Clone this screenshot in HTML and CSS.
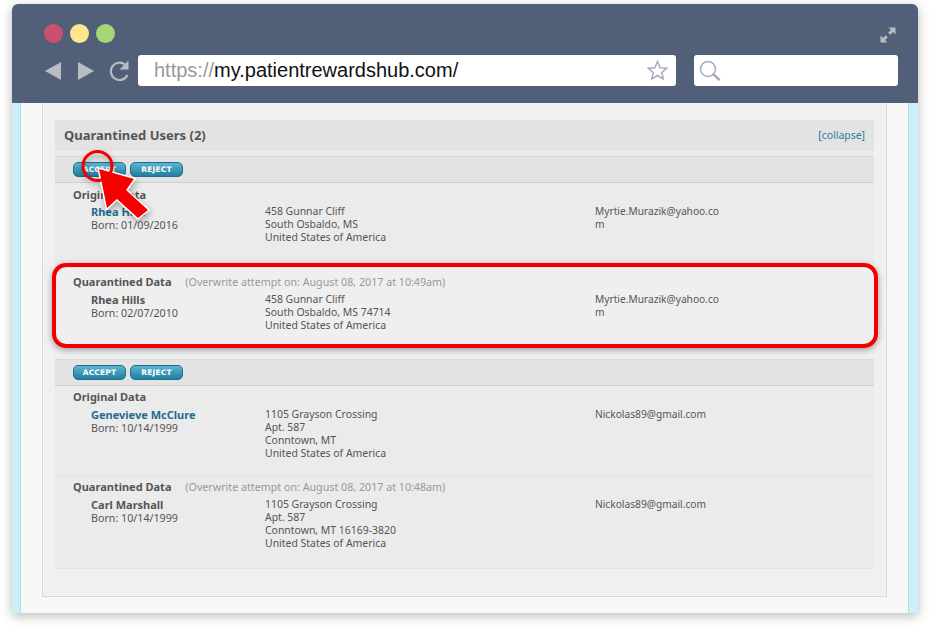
FILE: index.html
```html
<!DOCTYPE html>
<html lang="en">
<head>
<meta charset="utf-8">
<title>Quarantined Users</title>
<link rel="stylesheet" href="styles.css">
</head>
<body>
<div class="window">
  <header class="toolbar">
    <div class="top-row">
      <div class="lights">
        <span class="light red"></span><span class="light yellow"></span><span class="light green"></span>
      </div>
      <svg class="expand" width="16" height="16" viewBox="0 0 16 16"><path fill="#b9bcc2" d="M15.500 .5v7l-2.500-2.500-2.800 2.800-2-2 2.800-2.800-2.500-2.500zM.5 15.500v-7l2.500 2.500 2.800-2.800 2 2-2.800 2.800 2.500 2.500z"/></svg>
    </div>
    <div class="nav-row">
      <svg class="nav-icon back" width="16" height="18" viewBox="0 0 16 18"><path fill="#b9bcc2" d="M16 0v18L0 9z"/></svg>
      <svg class="nav-icon fwd" width="16" height="18" viewBox="0 0 16 18"><path fill="#b9bcc2" d="M0 0v18l16-9z"/></svg>
      <svg class="nav-icon reload" width="20" height="21" viewBox="0 0 20 21"><path fill="none" stroke="#b9bcc2" stroke-width="2.200" d="M16 4.500A8.700 8.700 0 1 0 18.500 15"/><path fill="#b9bcc2" d="M19.500 .5v9h-9z"/></svg>
      <div class="url-bar">
        <span class="url"><span class="scheme">https://</span>my.patientrewardshub.com/</span>
        <svg width="21" height="21" viewBox="0 0 21 21"><path fill="none" stroke="#a5adbb" stroke-width="1.500" d="M10.500 1.500l2.600 6.200 6.700.5-5.100 4.300 1.600 6.500-5.800-3.500-5.800 3.500 1.600-6.500-5.100-4.300 6.700-.5z"/></svg>
      </div>
      <div class="search-bar">
        <svg width="22" height="22" viewBox="0 0 22 22"><circle cx="9" cy="9" r="7.500" fill="none" stroke="#a5adbb" stroke-width="1.500"/><path stroke="#a5adbb" stroke-width="2.400" stroke-linecap="round" d="M14.500 14.500l5.500 5"/></svg>
      </div>
    </div>
  </header>
  <div class="page">
    <div class="strip"></div>
    <main class="margin">
      <div class="panel">
        <section class="section">
          <div class="section-head">
            <h2>Quarantined Users (2)</h2>
            <a class="collapse" href="#">[collapse]</a>
          </div>
          <div class="actions">
            <button class="btn">ACCEPT</button><button class="btn">REJECT</button>
          </div>
          <div class="block first">
            <h3>Original Data</h3>
            <div class="row">
              <div class="who"><a class="name" href="#">Rhea Hills</a><br>Born: 01/09/2016</div>
              <div class="addr">458 Gunnar Cliff<br>South Osbaldo, MS<br>United States of America</div>
              <div class="mail">Myrtie.Murazik@yahoo.co<br>m</div>
            </div>
          </div>
          <div class="block second">
            <h3>Quarantined Data <span class="note">(Overwrite attempt on: August 08, 2017 at 10:49am)</span></h3>
            <div class="row">
              <div class="who"><b class="name plain">Rhea Hills</b><br>Born: 02/07/2010</div>
              <div class="addr">458 Gunnar Cliff<br>South Osbaldo, MS 74714<br>United States of America</div>
              <div class="mail">Myrtie.Murazik@yahoo.co<br>m</div>
            </div>
          </div>
          <div class="actions spaced">
            <button class="btn">ACCEPT</button><button class="btn">REJECT</button>
          </div>
          <div class="block third">
            <h3>Original Data</h3>
            <div class="row">
              <div class="who"><a class="name" href="#">Genevieve McClure</a><br>Born: 10/14/1999</div>
              <div class="addr">1105 Grayson Crossing<br>Apt. 587<br>Conntown, MT<br>United States of America</div>
              <div class="mail">Nickolas89@gmail.com</div>
            </div>
          </div>
          <div class="block fourth">
            <h3>Quarantined Data <span class="note">(Overwrite attempt on: August 08, 2017 at 10:48am)</span></h3>
            <div class="row">
              <div class="who"><b class="name plain">Carl Marshall</b><br>Born: 10/14/1999</div>
              <div class="addr">1105 Grayson Crossing<br>Apt. 587<br>Conntown, MT 16169-3820<br>United States of America</div>
              <div class="mail">Nickolas89@gmail.com</div>
            </div>
          </div>
        </section>
      </div>
    </main>
    <div class="strip right"></div>
    <div class="highlight"></div>
    <svg class="pointer" width="74" height="74" viewBox="0 0 74 74">
      <path fill="#f40000" stroke="#fff" stroke-width="3" d="M20 21l35 10-8 11 22 20-10 8-21-19-10 9z"/>
      <circle cx="18.500" cy="18" r="14.500" fill="none" stroke="#f00000" stroke-width="3"/>
      <path fill="#f40000" d="M20 21l35 10-8 11 22 20-10 8-21-19-10 9z"/>
    </svg>
  </div>
</div>
</body>
</html>
```

FILE: styles.css
```css
* { box-sizing: border-box; }
html, body { margin: 0; height: 100%; background: #fff; }
body { padding: 4px 12px 20px; font-family: "Noto Sans", sans-serif; font-size: 10.450px; line-height: 13px; color: #555; overflow: hidden; }
.window { width: 906px; height: 609px; display: flex; flex-direction: column; border-radius: 6px 6px 0 0; box-shadow: 0 3px 12px rgba(0,0,0,.28); }
.toolbar { height: 99px; background: #516078; border-radius: 6px 6px 0 0; padding: 19px 22px 0 32px; flex: none; }
.top-row { height: 20px; display: flex; justify-content: space-between; align-items: center; }
.lights { display: flex; gap: 7px; }
.light { width: 19px; height: 19px; border-radius: 50%; }
.red { background: #c9516f; }
.yellow { background: #fce88a; }
.green { background: #a6d576; }
.expand { margin-top: 4px; }
.nav-row { display: flex; align-items: center; margin: 12px -2px 0 0; height: 31px; }
.nav-icon { flex: none; }
.back { margin: 0 17px 0 1px; }
.fwd { margin-right: 15px; }
.reload { margin-right: 9px; }
.url-bar { width: 538px; height: 31px; background: #fff; border-radius: 3px; display: flex; align-items: center; justify-content: space-between; padding: 0 8px 0 16px; flex: none; }
.url { font-family: "Liberation Sans", sans-serif; font-size: 20px; color: #111; }
.scheme { color: #999; }
.search-bar { width: 204px; height: 31px; margin-left: 18px; background: #fff; border-radius: 3px; padding: 5px 0 0 5px; flex: none; }
.page { flex: 1; display: flex; position: relative; background: #fff; min-height: 0; }
.strip { width: 9px; background: #cdeff8; border-right: 1px solid #a8e2ef; flex: none; }
.strip.right { width: 10px; border-right: 0; border-left: 1px solid #a8e2ef; }
.margin { flex: 1; background: #f8f8f8; padding: 0 21px 16px; display: flex; min-width: 0; }
.panel { flex: 1; background: #f0f0f0; border: 1px solid #d6d6d6; border-top: 0; padding: 17px 12px 0; box-shadow: inset 0 0 0 1px #f4f4f4; }
.section { background: #ebebeb; height: 449px; border-bottom: 1px solid #e4e4e4; }
.section-head { height: 31px; background: #e3e3e3; display: flex; justify-content: space-between; align-items: center; padding: 0 9px; }
h2 { margin: 0; font-size: 13px; font-weight: bold; color: #555; }
.collapse { color: #2b7fa6; text-decoration: none; font-size: 10.450px; }
.actions { height: 27px; margin-top: 5px; background: #e3e3e3; border-top: 1px solid #d8d8d8; border-bottom: 1px solid #cfcfcf; padding: 5px 0 0 18px; display: flex; gap: 4px; align-items: flex-start; }
.actions.spaced { margin-top: 0; }
.btn { width: 53px; height: 15px; padding: 0; border: 1px solid #1d6f8f; border-radius: 5px; background: linear-gradient(#5db4d1, #217f9f); color: #fff; font: bold 7.500px/13px "DejaVu Sans", sans-serif; letter-spacing: .2px; }
.block { padding: 4px 18px 0; }
.first { height: 84px; padding-top: 5px; }
.second { height: 92px; border-top: 1px solid #e4e4e4; padding-top: 7px; background: #efefef; }
.third { height: 89px; padding-top: 4px; }
.third h3 { margin-bottom: 5px; }
.fourth { height: 94px; border-top: 1px solid #e4e4e4; }
h3 { margin: 0 0 4px; font-size: 11px; line-height: 13px; font-weight: bold; color: #555; }
.note { font-weight: normal; color: #999; font-size: 10.700px; margin-left: 11px; }
.row { display: grid; grid-template-columns: 174px 330px 130px; padding-left: 18px; }
.who { font-size: 10.700px; }
.mail { font-size: 10.200px; }
.name { font-weight: bold; font-size: 11px; text-decoration: none; color: #1c6d92; }
.name.plain { color: #555; }
.highlight { position: absolute; left: 40px; top: 160px; width: 826px; height: 85px; border: 4px solid #f00000; border-radius: 14px; box-shadow: 0 2px 6px rgba(0,0,0,.35); }
.pointer { position: absolute; left: 67px; top: 45px; filter: drop-shadow(1px 3px 3px rgba(0,0,0,.3)); }
```
